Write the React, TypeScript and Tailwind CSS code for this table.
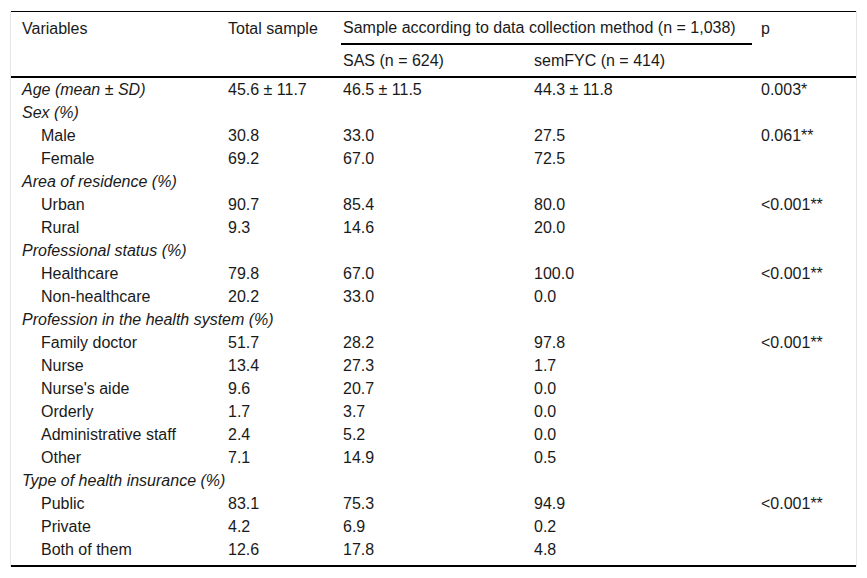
type Row = { label: string; sub?: boolean; italic?: boolean; vals?: [string, string, string, string] };

const rows: Row[] = [
  { label: 'Age (mean ± SD)', italic: true, vals: ['45.6 ± 11.7', '46.5 ± 11.5', '44.3 ± 11.8', '0.003*'] },
  { label: 'Sex (%)', italic: true },
  { label: 'Male', sub: true, vals: ['30.8', '33.0', '27.5', '0.061**'] },
  { label: 'Female', sub: true, vals: ['69.2', '67.0', '72.5', ''] },
  { label: 'Area of residence (%)', italic: true },
  { label: 'Urban', sub: true, vals: ['90.7', '85.4', '80.0', '<0.001**'] },
  { label: 'Rural', sub: true, vals: ['9.3', '14.6', '20.0', ''] },
  { label: 'Professional status (%)', italic: true },
  { label: 'Healthcare', sub: true, vals: ['79.8', '67.0', '100.0', '<0.001**'] },
  { label: 'Non-healthcare', sub: true, vals: ['20.2', '33.0', '0.0', ''] },
  { label: 'Profession in the health system (%)', italic: true },
  { label: 'Family doctor', sub: true, vals: ['51.7', '28.2', '97.8', '<0.001**'] },
  { label: 'Nurse', sub: true, vals: ['13.4', '27.3', '1.7', ''] },
  { label: "Nurse's aide", sub: true, vals: ['9.6', '20.7', '0.0', ''] },
  { label: 'Orderly', sub: true, vals: ['1.7', '3.7', '0.0', ''] },
  { label: 'Administrative staff', sub: true, vals: ['2.4', '5.2', '0.0', ''] },
  { label: 'Other', sub: true, vals: ['7.1', '14.9', '0.5', ''] },
  { label: 'Type of health insurance (%)', italic: true },
  { label: 'Public', sub: true, vals: ['83.1', '75.3', '94.9', '<0.001**'] },
  { label: 'Private', sub: true, vals: ['4.2', '6.9', '0.2', ''] },
  { label: 'Both of them', sub: true, vals: ['12.6', '17.8', '4.8', ''] },
];

const cols = 'grid grid-cols-[215px_115px_191px_227px_97px]';

export default function App() {
  return (
    <div className="w-[867px] h-[578px] bg-white pt-[11px] pl-[10px] text-[16px] text-[#1a1a1a] font-['Liberation_Sans',Arial,sans-serif]">
      <div className="w-[847px] border-x border-[#e6e6e6]">
        <div className="border-t border-black">
          {/* Header */}
          <div className={cols}>
            <div className="pl-[11px] h-[33px] flex items-center">Variables</div>
            <div className="pl-[2px] h-[33px] flex items-center whitespace-nowrap">Total sample</div>
            <div className="col-span-2 mr-[7px] pl-[2px] h-[33px] flex items-center border-b-2 border-black whitespace-nowrap">
              Sample according to data collection method (n = 1,038)
            </div>
            <div className="pl-[2px] h-[33px] flex items-center">p</div>
          </div>
          <div className={`${cols} border-b-2 border-black`}>
            <div className="h-[31px]" />
            <div className="h-[31px]" />
            <div className="pl-[2px] h-[31px] flex items-center">SAS (n = 624)</div>
            <div className="pl-[2px] h-[31px] flex items-center">semFYC (n = 414)</div>
            <div className="h-[31px]" />
          </div>
          {/* Body */}
          <div className="pb-[4px] border-b-2 border-black">
            {rows.map((r) => (
              <div key={r.label} className={`${cols} h-[23px] items-center leading-[23px]`}>
                <div className={`${r.sub ? 'pl-[30px]' : 'pl-[11px]'} ${r.italic ? 'italic' : ''} whitespace-nowrap`}>
                  {r.label}
                </div>
                {(r.vals ?? ['', '', '', '']).map((v, i) => (
                  <div key={i} className="pl-[2px] whitespace-nowrap">
                    {v}
                  </div>
                ))}
              </div>
            ))}
          </div>
        </div>
      </div>
    </div>
  );
}
